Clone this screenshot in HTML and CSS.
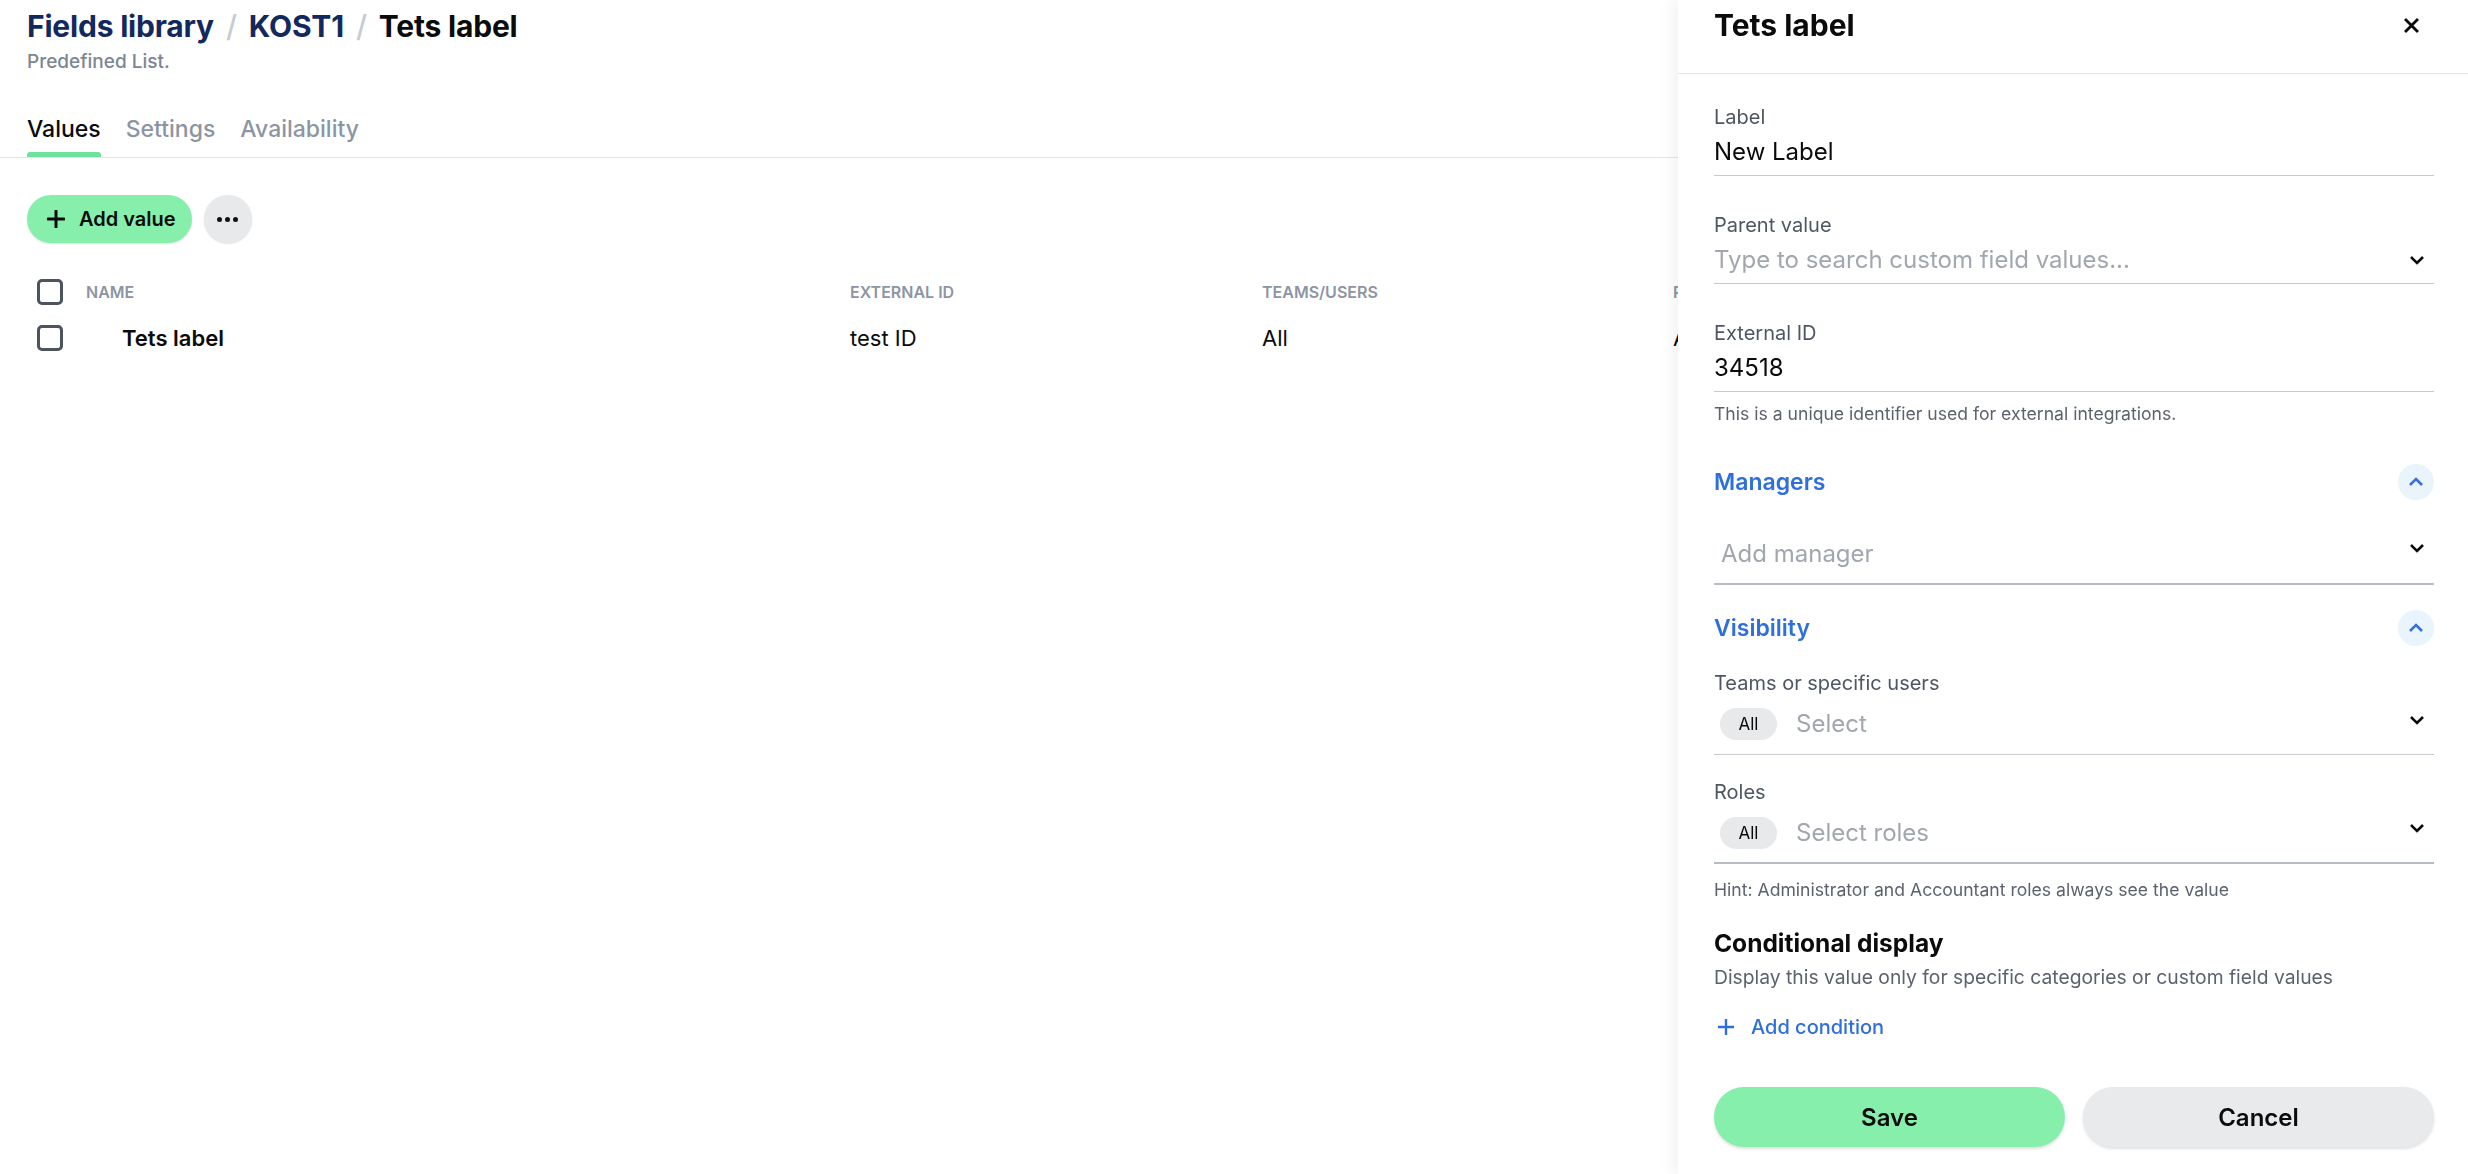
FILE: index.html
```html
<!DOCTYPE html>
<html lang="en">
  <head>
    <meta charset="utf-8" />
    <link rel="stylesheet" href="styles.css">
    <title>Tets label · Fields library</title>
  </head>
  <body>
    <div class="page">
      <h1 class="breadcrumb">
        <a class="crumb">Fields library</a>
        <span class="crumb-sep">/</span>
        <a class="crumb">KOST1</a>
        <span class="crumb-sep">/</span>
        <span class="crumb-current">Tets label</span>
      </h1>
      <div class="subtitle">Predefined List.</div>

      <nav class="tabs">
        <a class="tab tab-active">Values</a>
        <a class="tab">Settings</a>
        <a class="tab">Availability</a>
      </nav>

      <div class="toolbar">
        <button type="button" class="btn btn-primary">
          <svg class="icon-plus" viewBox="0 0 18 18" width="18" height="18">
            <path d="M9 1v16M1 9h16" stroke="currentColor" stroke-width="3" stroke-linecap="round" fill="none" />
          </svg>
          Add value
        </button>
        <button type="button" class="btn-more">
          <span class="dot"></span><span class="dot"></span><span class="dot"></span>
        </button>
      </div>

      <div class="values-table">
        <div class="row row-head">
          <div class="cell cell-check"><span class="checkbox"></span></div>
          <div class="cell">Name</div>
          <div class="cell">External ID</div>
          <div class="cell">Teams/Users</div>
          <div class="cell">Roles</div>
        </div>
        <div class="row">
          <div class="cell cell-check"><span class="checkbox"></span></div>
          <div class="cell cell-name">Tets label</div>
          <div class="cell">test ID</div>
          <div class="cell">All</div>
          <div class="cell">All</div>
        </div>
      </div>
    </div>

    <aside class="drawer">
      <header class="drawer-head">
        <h2 class="drawer-title">Tets label</h2>
        <button type="button" class="close-btn">
          <svg viewBox="0 0 15 15" width="15" height="15">
            <path d="M2 2l11 11M13 2L2 13" stroke="currentColor" stroke-width="2.8" stroke-linecap="square" fill="none" />
          </svg>
        </button>
      </header>

      <div class="drawer-body">
        <div class="field">
          <label class="field-label">Label</label>
          <div class="input">New Label</div>
        </div>

        <div class="field">
          <label class="field-label">Parent value</label>
          <div class="input">
            <span class="placeholder">Type to search custom field values...</span>
            <svg class="chevron chevron-mid" viewBox="0 0 16 10" width="16" height="10">
              <path d="M2 2l6 6 6-6" stroke="currentColor" stroke-width="2.6" fill="none" />
            </svg>
          </div>
        </div>

        <div class="field">
          <label class="field-label">External ID</label>
          <div class="input">34518</div>
          <p class="field-hint">This is a unique identifier used for external integrations.</p>
        </div>

        <section class="section section-managers">
          <div class="section-head">
            <h3 class="section-title">Managers</h3>
            <button type="button" class="toggle">
              <svg viewBox="0 0 16 10" width="16" height="10">
                <path d="M2 8l6-6 6 6" stroke="currentColor" stroke-width="2.6" fill="none" />
              </svg>
            </button>
          </div>
          <div class="select select-single select-strong">
            <span class="placeholder">Add manager</span>
            <svg class="chevron" viewBox="0 0 16 10" width="16" height="10">
              <path d="M2 2l6 6 6-6" stroke="currentColor" stroke-width="2.6" fill="none" />
            </svg>
          </div>
        </section>

        <section class="section section-visibility">
          <div class="section-head">
            <h3 class="section-title">Visibility</h3>
            <button type="button" class="toggle">
              <svg viewBox="0 0 16 10" width="16" height="10">
                <path d="M2 8l6-6 6 6" stroke="currentColor" stroke-width="2.6" fill="none" />
              </svg>
            </button>
          </div>

          <div class="field field-tight">
            <label class="field-label">Teams or specific users</label>
            <div class="select select-multi">
              <span class="chip">All</span>
              <span class="placeholder">Select</span>
              <svg class="chevron" viewBox="0 0 16 10" width="16" height="10">
                <path d="M2 2l6 6 6-6" stroke="currentColor" stroke-width="2.6" fill="none" />
              </svg>
            </div>
          </div>

          <div class="field field-tight">
            <label class="field-label">Roles</label>
            <div class="select select-multi select-strong">
              <span class="chip">All</span>
              <span class="placeholder">Select roles</span>
              <svg class="chevron" viewBox="0 0 16 10" width="16" height="10">
                <path d="M2 2l6 6 6-6" stroke="currentColor" stroke-width="2.6" fill="none" />
              </svg>
            </div>
            <p class="field-hint hint-roles">Hint: Administrator and Accountant roles always see the value</p>
          </div>
        </section>

        <section class="conditional">
          <h3 class="conditional-title">Conditional display</h3>
          <p class="conditional-text">Display this value only for specific categories or custom field values</p>
          <button type="button" class="link-btn">
            <svg viewBox="0 0 18 18" width="18" height="18">
              <path d="M9 1v16M1 9h16" stroke="currentColor" stroke-width="2.4" fill="none" />
            </svg>
            Add condition
          </button>
        </section>

        <div class="drawer-actions">
          <button type="button" class="btn-lg btn-save">Save</button>
          <button type="button" class="btn-lg btn-cancel">Cancel</button>
        </div>
      </div>
    </aside>
  </body>
</html>
```

FILE: styles.css
```css
* {
  box-sizing: border-box;
}
body {
  margin: 0;
  font-family: "Inter", "Noto Sans", sans-serif;
  color: #0b0b0c;
  background: #fff;
}
button {
  font-family: inherit;
  border: 0;
  cursor: pointer;
}
p,
h1,
h2,
h3 {
  margin: 0;
}

/* page */
.page {
  padding: 8px 27px;
}
.breadcrumb {
  display: flex;
  gap: 12px;
  font-size: 30px;
  line-height: 36px;
  font-weight: 700;
  letter-spacing: -0.2px;
}
.crumb {
  color: #13295e;
}
.crumb-sep {
  color: #c7cbd2;
  font-weight: 500;
}
.subtitle {
  margin-top: 6px;
  font-size: 19px;
  line-height: 24px;
  font-weight: 500;
  color: #7d8693;
}
.tabs {
  display: flex;
  gap: 25px;
  margin: 41px -27px 0;
  padding: 0 27px;
  border-bottom: 1px solid #e6e7ea;
}
.tab {
  position: relative;
  padding-bottom: 14px;
  font-size: 23px;
  line-height: 28px;
  font-weight: 500;
  color: #8d95a3;
}
.tab-active {
  color: #0b0b0c;
}
.tab-active::after {
  content: "";
  position: absolute;
  left: 0;
  right: 0;
  bottom: 0;
  height: 5px;
  border-radius: 3px 3px 0 0;
  background: #6ee19d;
}

.toolbar {
  display: flex;
  gap: 12px;
  margin-top: 37px;
}
.btn {
  display: flex;
  align-items: center;
  height: 48px;
  border-radius: 24px;
  font-size: 20px;
  font-weight: 600;
  color: #0b0b0c;
}
.btn-primary {
  gap: 14px;
  padding: 0 16px 0 20px;
  background: #86efac;
  box-shadow: 0 1px 2px rgba(0, 0, 0, 0.12);
}
.btn-more {
  display: flex;
  align-items: center;
  justify-content: center;
  gap: 3px;
  width: 48px;
  height: 48px;
  border-radius: 50%;
  background: #e8e9eb;
  box-shadow: 0 1px 2px rgba(0, 0, 0, 0.12);
}
.dot {
  width: 5px;
  height: 5px;
  border-radius: 50%;
  background: #111;
}

/* values table */
.values-table {
  margin-top: 26px;
}
.row {
  display: grid;
  grid-template-columns: 59px 764px 412px 411px 1fr;
  align-items: center;
  height: 46px;
  font-size: 22px;
}
.row-head .cell {
  font-size: 16px;
  font-weight: 600;
  text-transform: uppercase;
  color: #8d95a3;
}
.cell-check {
  padding-left: 10px;
  display: flex;
}
.checkbox {
  width: 26px;
  height: 26px;
  border: 3px solid #4d545f;
  border-radius: 5px;
}
.cell-name {
  padding-left: 36px;
  font-weight: 600;
}

/* side drawer */
.drawer {
  position: fixed;
  top: 0;
  right: 0;
  width: 790px;
  height: 100vh;
  background: #fff;
  box-shadow: -6px 0 14px rgba(0, 0, 0, 0.05);
}
.drawer-head {
  display: flex;
  justify-content: space-between;
  align-items: flex-start;
  height: 74px;
  padding: 7px 49px 0 36px;
  border-bottom: 1px solid #e6e7ea;
}
.drawer-title {
  font-size: 30px;
  line-height: 36px;
  font-weight: 700;
}
.close-btn {
  margin-top: 11px;
  padding: 0;
  background: none;
  color: #0b0b0c;
}
.drawer-body {
  padding: 31px 34px 0 36px;
}
.field + .field {
  margin-top: 37px;
}
.field-label {
  display: block;
  margin-bottom: 7px;
  font-size: 20px;
  line-height: 24px;
  color: #4f5663;
}
.input {
  display: flex;
  justify-content: space-between;
  align-items: flex-start;
  height: 40px;
  font-size: 24px;
  line-height: 32px;
  border-bottom: 1px solid #c7cacf;
}
.placeholder {
  color: #a2a7af;
  font-size: 24px;
  line-height: 32px;
}
.chevron {
  flex: none;
  margin-right: 9px;
  color: #0b0b0c;
}
.chevron-mid {
  margin-top: 11px;
}
.field-hint {
  margin-top: 12px;
  font-size: 17.6px;
  line-height: 20px;
  color: #5c626d;
}

.section {
  margin-top: 40px;
}
.section-visibility {
  margin-top: 25px;
}
.section-head {
  display: flex;
  justify-content: space-between;
  align-items: center;
  height: 36px;
}
.section-title {
  font-size: 23px;
  line-height: 28px;
  font-weight: 600;
  color: #2f6fdd;
}
.toggle {
  display: flex;
  align-items: center;
  justify-content: center;
  width: 36px;
  height: 36px;
  padding: 0;
  border-radius: 50%;
  background: #e9f4fd;
  color: #3470dc;
}

.select {
  display: flex;
  align-items: center;
  border-bottom: 1px solid #c7cacf;
}
.select-strong {
  border-bottom: 2px solid #b7bbc2;
}
.select .chevron {
  margin-left: auto;
  align-self: flex-start;
}
.select-single {
  align-items: flex-start;
  height: 47px;
  margin-top: 38px;
  padding-left: 7px;
}
.select-single .chevron {
  margin-top: 5px;
}
.select-multi {
  height: 52px;
  margin-top: 8px;
  padding: 0 0 9px 6px;
}
.select-multi.select-strong {
  padding-bottom: 8px;
}
.select-multi .chevron {
  margin-top: 12px;
}
.select-multi.select-strong .chevron {
  margin-top: 11px;
}
.field-tight {
  margin-top: 25px;
}
.field-tight + .field-tight {
  margin-top: 25px;
}
.chip {
  display: flex;
  align-items: center;
  justify-content: center;
  width: 57px;
  height: 32px;
  margin-right: 19px;
  border-radius: 16px;
  background: #e8e9eb;
  font-size: 17px;
}
.hint-roles {
  margin-top: 16px;
}

.conditional {
  margin-top: 29px;
}
.conditional-title {
  font-size: 24.5px;
  line-height: 28px;
  font-weight: 700;
}
.conditional-text {
  margin-top: 8px;
  font-size: 19.3px;
  line-height: 24px;
  color: #5c626d;
}
.link-btn {
  display: flex;
  align-items: center;
  gap: 16px;
  margin-top: 26px;
  padding: 0 0 0 3px;
  background: none;
  font-size: 20px;
  line-height: 24px;
  font-weight: 500;
  color: #2f6fdd;
}

.drawer-actions {
  display: grid;
  grid-template-columns: 1fr 1fr;
  gap: 18px;
  margin-top: 48px;
}
.btn-lg {
  height: 60px;
  border-radius: 30px;
  font-size: 24px;
  font-weight: 600;
  color: #0b0b0c;
  box-shadow: 0 2px 3px rgba(0, 0, 0, 0.12);
}
.btn-save {
  background: #86efac;
}
.btn-cancel {
  background: #e9eaec;
}
```
